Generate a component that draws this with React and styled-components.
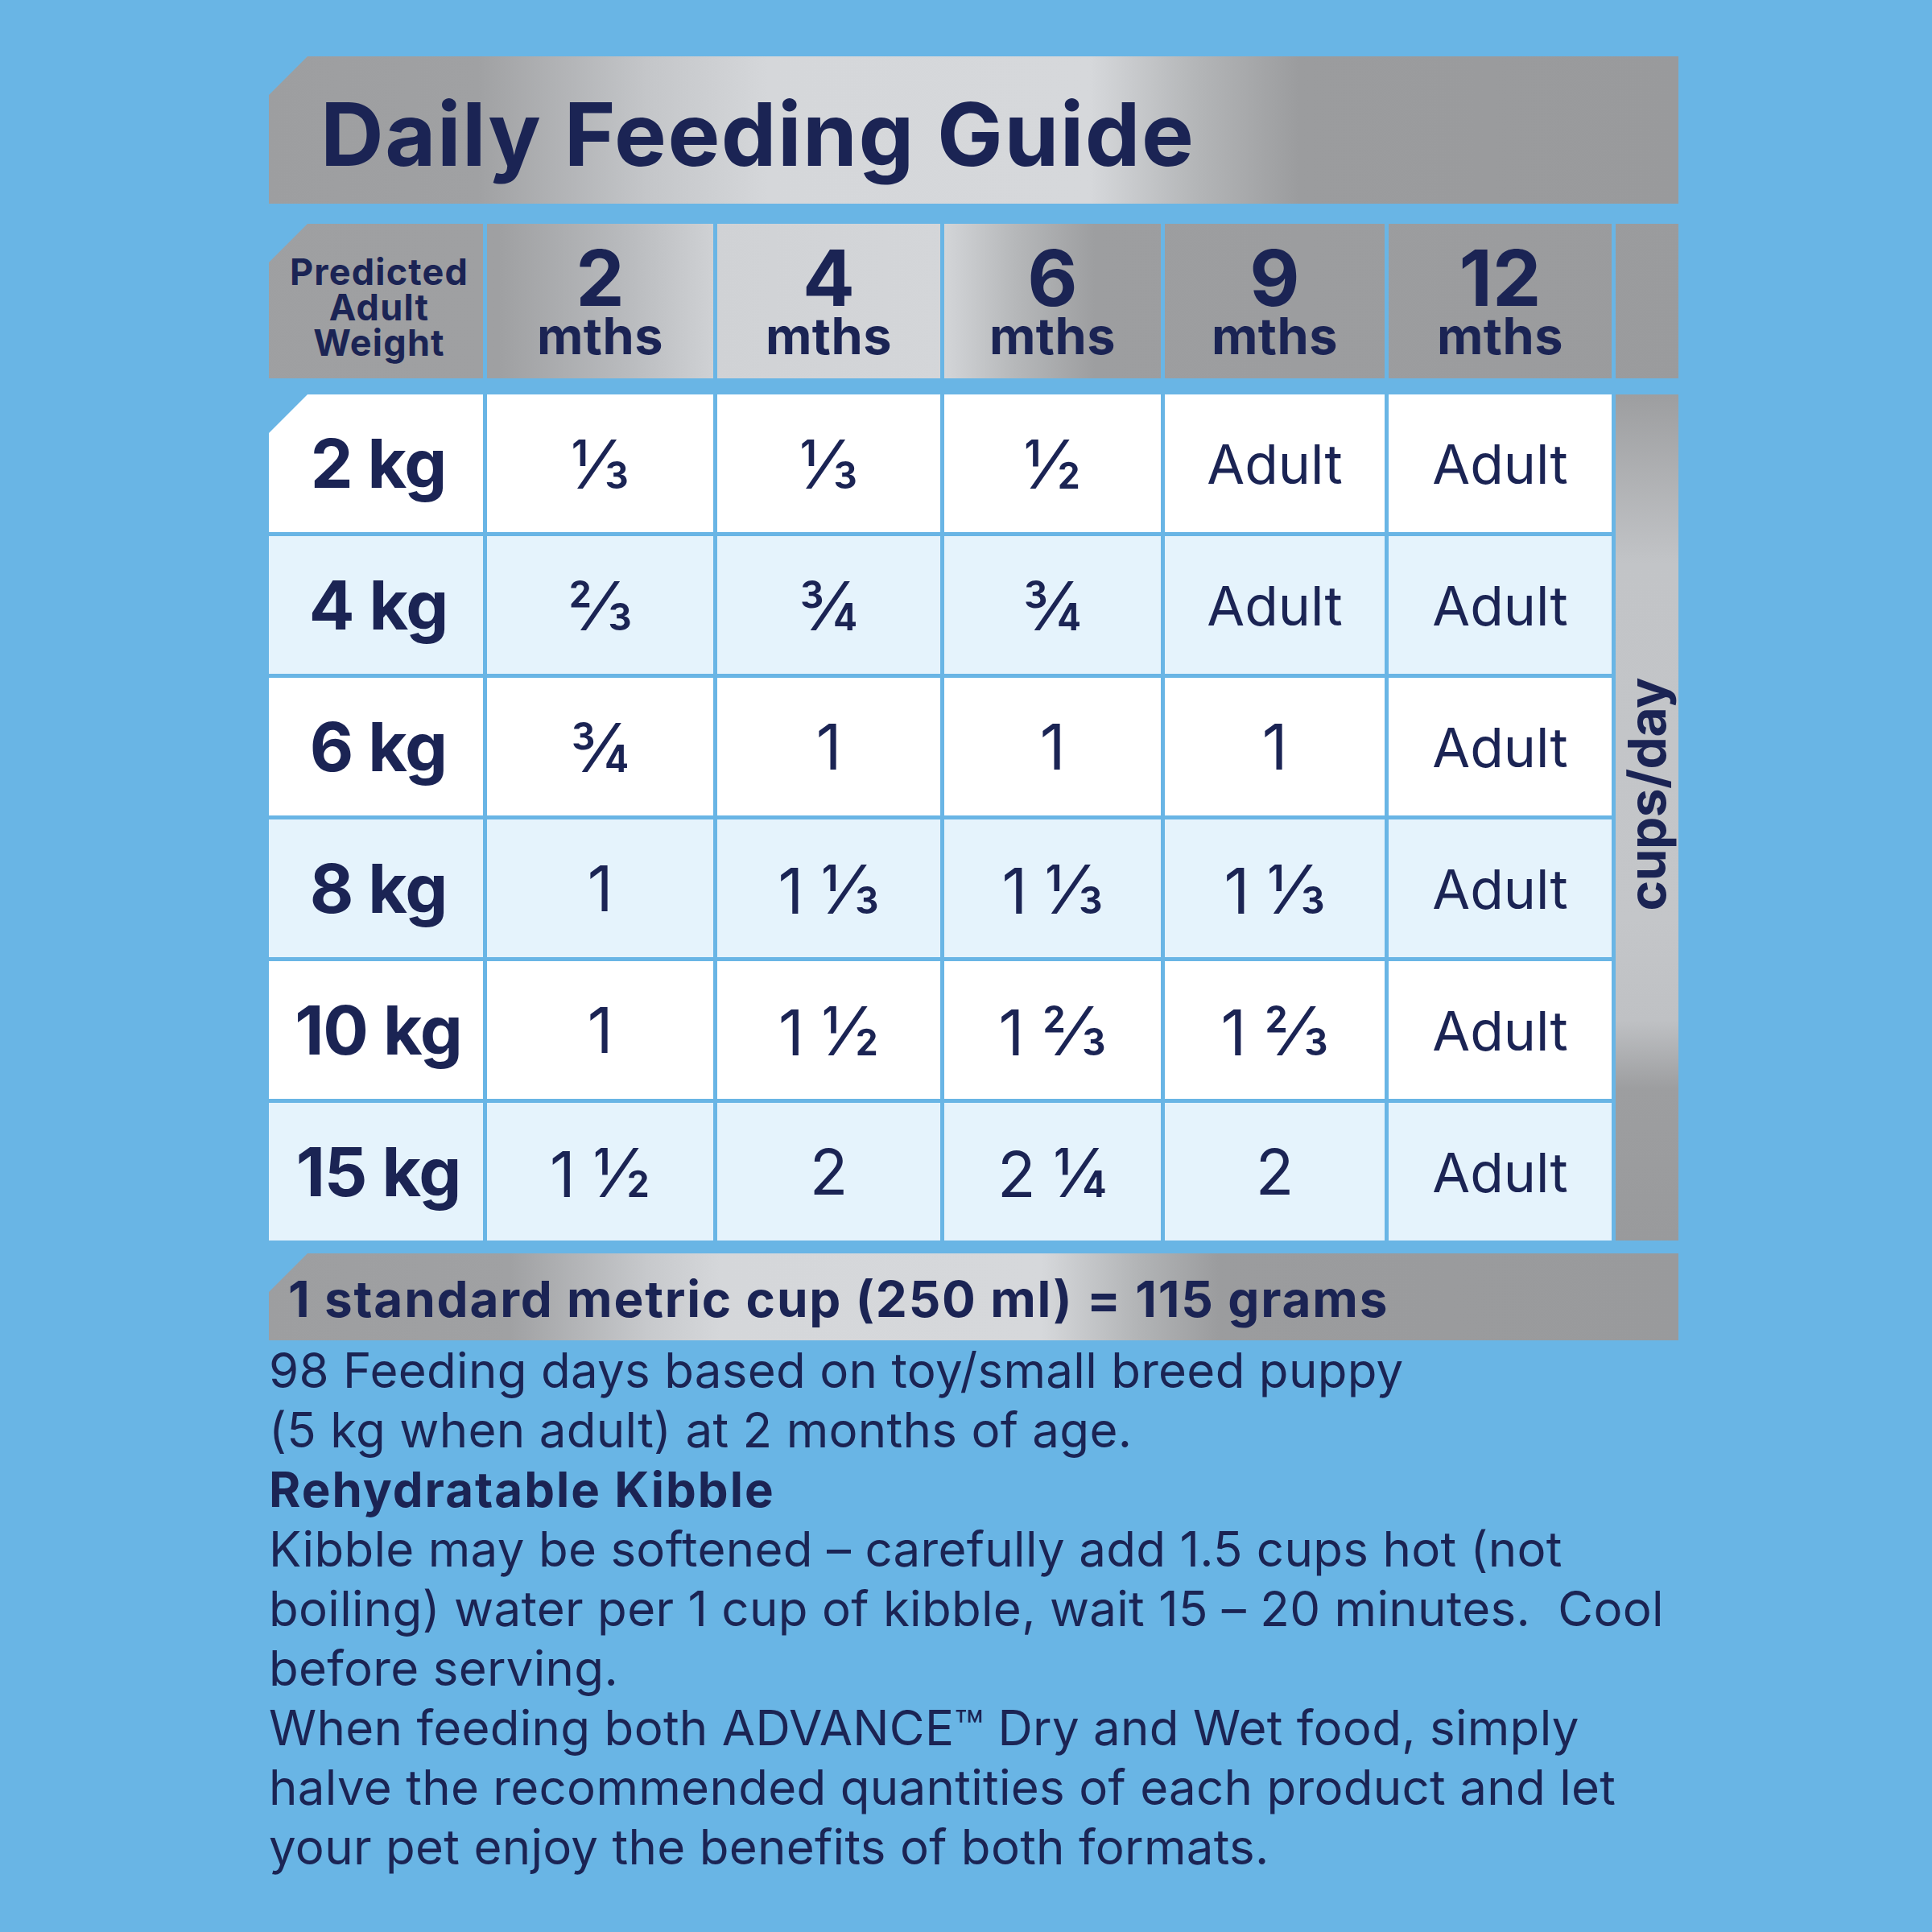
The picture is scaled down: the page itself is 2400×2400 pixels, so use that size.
import React from 'react'
import styled, { createGlobalStyle } from 'styled-components'

const NAVY = '#1b2454'
const SKY = '#69b5e5'
const COLS = '266px 281px 277px 269px 273px 277px 78px'
const CUT = 'polygon(48px 0, 100% 0, 100% 100%, 0 100%, 0 48px)'
const FRACTIONS = ['⅓', '⅔', '½', '¼', '¾']

const GlobalStyle = createGlobalStyle`
  html, body {
    margin: 0;
    padding: 0;
    background: ${SKY};
  }
  body {
    font-family: Inter, "Noto Sans", sans-serif;
    color: ${NAVY};
  }
`

const Page = styled.div`
  min-height: 2400px;
  box-sizing: border-box;
  padding: 70px 0 0 334px;
`

const Sheet = styled.div`
  width: 1751px;
  display: flex;
  flex-direction: column;
`

const TitleBar = styled.div`
  height: 183px;
  box-sizing: border-box;
  padding: 10px 0 0 64px;
  display: flex;
  align-items: center;
  clip-path: ${CUT};
  background: linear-gradient(
    90deg,
    #9d9ea0 0px,
    #a0a1a3 260px,
    #c4c6c9 470px,
    #d5d7da 620px,
    #d6d8db 1020px,
    #b4b6b8 1150px,
    #9b9c9e 1280px,
    #999a9c 100%
  );
  margin-bottom: 25px;
`

const Title = styled.h1`
  margin: 0;
  font-size: 109px;
  font-weight: 700;
  letter-spacing: 1.5px;
  line-height: 1;
`

const HeaderRow = styled.div`
  display: grid;
  grid-template-columns: ${COLS};
  column-gap: 5px;
  height: 192px;
  margin-bottom: 20px;
`

const HeadCell = styled.div`
  display: flex;
  flex-direction: column;
  align-items: center;
  box-sizing: border-box;
  padding-top: ${(p) => (p.$label ? 38 : 32)}px;
  padding-left: ${(p) => (p.$label ? 8 : 0)}px;
  clip-path: ${(p) => (p.$label ? CUT : 'none')};
  background: linear-gradient(
      90deg,
      #9e9fa1 0px,
      #9fa0a2 620px,
      #b9bbbe 780px,
      #d0d2d5 890px,
      #d4d6d9 1170px,
      #b6b8ba 1260px,
      #9d9ea0 1360px,
      #999a9c 2400px
    )
    fixed;
`

const WeightLabel = styled.div`
  font-size: 45px;
  font-weight: 700;
  line-height: 44px;
  text-align: center;
  letter-spacing: 1.2px;
`

const AgeNumber = styled.div`
  font-size: 96px;
  font-weight: 700;
  line-height: 70px;
`

const AgeUnit = styled.div`
  font-size: 63px;
  font-weight: 700;
  line-height: 74px;
  letter-spacing: 0.5px;
`

const Body = styled.div`
  display: grid;
  grid-template-columns: ${COLS};
  grid-template-rows: repeat(6, 171px);
  gap: 5px;
  margin-bottom: 16px;
`

const Cell = styled.div`
  display: flex;
  align-items: center;
  justify-content: center;
  background: ${(p) => (p.$alt ? '#e5f3fc' : '#ffffff')};
  clip-path: ${(p) => (p.$cut ? CUT : 'none')};
  font-size: ${(p) => (p.$word ? 68 : 78)}px;
  font-weight: 400;
  white-space: nowrap;
`

const Frac = styled.span`
  font-size: 1.08em;
`

const Weight = styled(Cell)`
  font-size: 84px;
  font-weight: 700;
  letter-spacing: -1px;
  padding-left: 6px;
`

const UnitColumn = styled.div`
  grid-column: 7;
  grid-row: 1 / span 6;
  display: flex;
  align-items: center;
  justify-content: center;
  padding-bottom: 58px;
  box-sizing: border-box;
  background: linear-gradient(
    180deg,
    #9d9ea0 0%,
    #c2c4c7 20%,
    #c4c6c9 62%,
    #bfc1c4 74%,
    #9d9ea0 82%,
    #999a9c 100%
  );
`

const UnitText = styled.span`
  writing-mode: vertical-rl;
  transform: rotate(180deg);
  font-size: 64px;
  font-weight: 700;
  letter-spacing: -0.5px;
  line-height: 1;
`

const CupBar = styled.div`
  height: 108px;
  box-sizing: border-box;
  padding: 6px 0 0 24px;
  display: flex;
  align-items: center;
  clip-path: ${CUT};
  background: linear-gradient(
    90deg,
    #9d9ea0 0px,
    #a0a1a3 300px,
    #c7c9cc 470px,
    #d5d7da 560px,
    #d6d8db 960px,
    #b2b4b6 1080px,
    #9b9c9e 1180px,
    #999a9c 100%
  );
`

const CupText = styled.div`
  font-size: 62px;
  font-weight: 700;
  letter-spacing: 1.8px;
  line-height: 1;
`

const Notes = styled.div`
  font-size: 60px;
  line-height: 74px;
  letter-spacing: 0.3px;
  white-space: nowrap;
`

const NoteHeading = styled.div`
  font-weight: 700;
  letter-spacing: 2px;
`

const ages = ['2', '4', '6', '9', '12']

const rows = [
  ['2 kg', '⅓', '⅓', '½', 'Adult', 'Adult'],
  ['4 kg', '⅔', '¾', '¾', 'Adult', 'Adult'],
  ['6 kg', '¾', '1', '1', '1', 'Adult'],
  ['8 kg', '1', '1 ⅓', '1 ⅓', '1 ⅓', 'Adult'],
  ['10 kg', '1', '1 ½', '1 ⅔', '1 ⅔', 'Adult'],
  ['15 kg', '1 ½', '2', '2 ¼', '2', 'Adult'],
]

// "1 ⅓" -> whole part plus a slightly larger fraction glyph
const Amount = ({ value }) => {
  const parts = value.split(' ')
  return (
    <span>
      {parts.map((part, i) => (
        <React.Fragment key={i}>
          {i > 0 && ' '}
          {FRACTIONS.includes(part) ? <Frac>{part}</Frac> : part}
        </React.Fragment>
      ))}
    </span>
  )
}

const App = () => {
  return (
    <Page>
      <GlobalStyle />
      <Sheet>
        <TitleBar>
          <Title>Daily Feeding Guide</Title>
        </TitleBar>

        <HeaderRow>
          <HeadCell $label>
            <WeightLabel>
              Predicted
              <br />
              Adult
              <br />
              Weight
            </WeightLabel>
          </HeadCell>
          {ages.map((age) => (
            <HeadCell key={age}>
              <AgeNumber>{age}</AgeNumber>
              <AgeUnit>mths</AgeUnit>
            </HeadCell>
          ))}
          <HeadCell />
        </HeaderRow>

        <Body>
          {rows.map(([weight, ...values], idx) => (
            <React.Fragment key={weight}>
              <Weight $alt={idx % 2 === 1} $cut={idx === 0}>
                {weight}
              </Weight>
              {values.map((v, i) => (
                <Cell key={i} $alt={idx % 2 === 1} $word={v === 'Adult'}>
                  <Amount value={v} />
                </Cell>
              ))}
            </React.Fragment>
          ))}
          <UnitColumn>
            <UnitText>cups/day</UnitText>
          </UnitColumn>
        </Body>

        <CupBar>
          <CupText>1 standard metric cup (250 ml) = 115 grams</CupText>
        </CupBar>

        <Notes>
          98 Feeding days based on toy/small breed puppy
          <br />
          (5 kg when adult) at 2 months of age.
          <NoteHeading>Rehydratable Kibble</NoteHeading>
          Kibble may be softened – carefully add 1.5 cups hot (not
          <br />
          boiling) water per 1 cup of kibble, wait 15 – 20 minutes.&nbsp; Cool
          <br />
          before serving.
          <br />
          When feeding both ADVANCE™ Dry and Wet food, simply
          <br />
          halve the recommended quantities of each product and let
          <br />
          your pet enjoy the benefits of both formats.
        </Notes>
      </Sheet>
    </Page>
  )
}

export default App
